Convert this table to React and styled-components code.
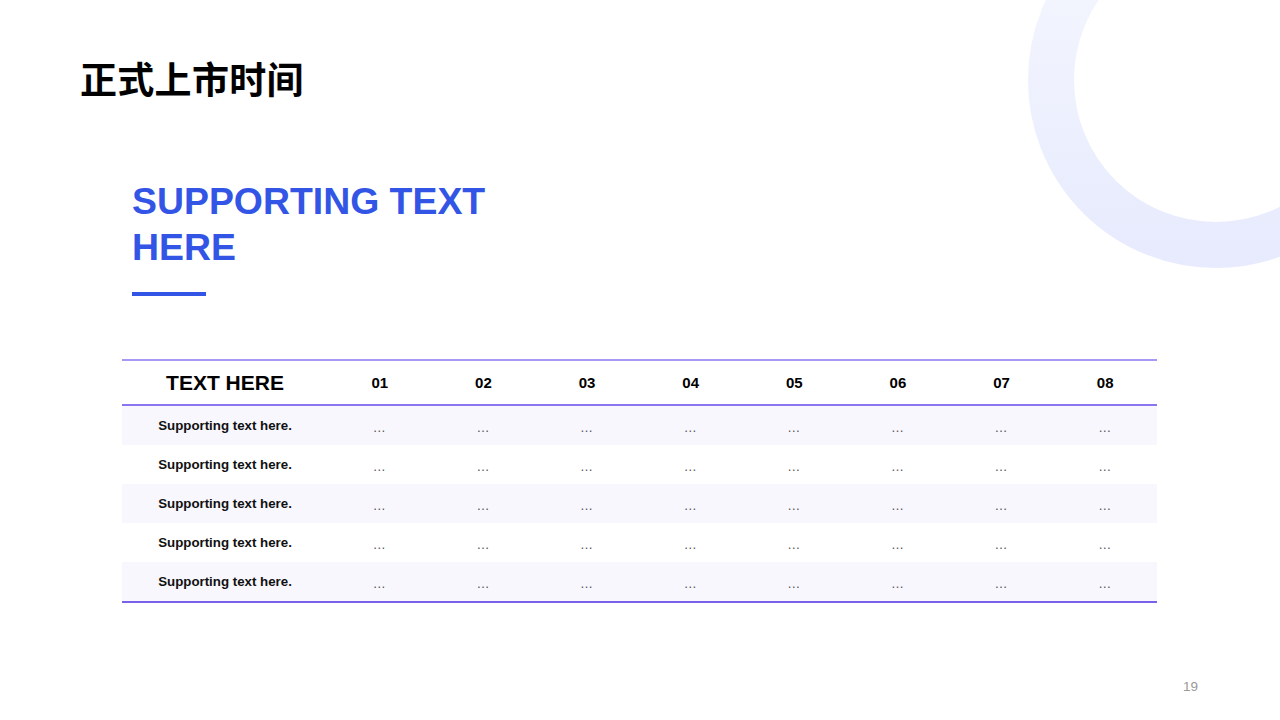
import React from 'react';
import styled, { createGlobalStyle } from 'styled-components';

const blue = `#3355e6`;
const rows = [1, 2, 3, 4, 5];
const cols = ['01', '02', '03', '04', '05', '06', '07', '08'];

const GlobalStyle = createGlobalStyle`
    html, body {
        margin: 0;
        padding: 0;
        background: #ffffff;
    }
    body {
        font-family: "Liberation Sans", Arial, sans-serif;
    }
`

const Slide = styled.div`
    position: relative;
    box-sizing: border-box;
    width: 1280px;
    height: 720px;
    overflow: hidden;
    background: #ffffff;
    display: flex;
    flex-direction: column;
`
const Ring = styled.svg`
    position: absolute;
    left: 1028px;
    top: -108px;
    width: 376px;
    height: 376px;
    pointer-events: none;
`
const Title = styled.h1`
    margin: 54px 0 0 80px;
    font-family: "Noto Sans CJK SC", "Liberation Sans", sans-serif;
    font-size: 37px;
    line-height: 48px;
    font-weight: 700;
    color: #000000;
    letter-spacing: 0.3px;
`
const Lead = styled.section`
    display: flex;
    flex-direction: column;
    align-items: flex-start;
    margin: 76px 0 0 132px;
`
const Subtitle = styled.h2`
    margin: 0;
    width: 380px;
    font-family: "Liberation Sans", Arial, sans-serif;
    font-size: 37.4px;
    line-height: 46px;
    font-weight: 700;
    color: ${blue};
`
const Bar = styled.div`
    width: 74px;
    height: 4px;
    margin-top: 22px;
    background: ${blue};
`
const Table = styled.div`
    margin: 63px 0 0 122px;
    width: 1035px;
    display: flex;
    flex-direction: column;
    border-bottom: 2px solid #7b61ea;
`
const Row = styled.div`
    display: grid;
    grid-template-columns: 206px repeat(8, 1fr);
    align-items: center;
    height: ${props => props.$head ? `43px` : `39px`};
    background: ${props => props.$shade ? `#f8f7fe` : `#ffffff`};
    ${props => props.$head && `
        border-top: 2px solid #a997f5;
        border-bottom: 2px solid #8b74ef;
    `}
`
const HeadLabel = styled.div`
    text-align: center;
    font-size: 21px;
    font-weight: 700;
    color: #000000;
`
const HeadNum = styled.div`
    text-align: center;
    font-size: 15px;
    font-weight: 700;
    color: #000000;
`
const RowLabel = styled.div`
    text-align: center;
    font-size: 13.3px;
    font-weight: 700;
    color: #111111;
`
const Cell = styled.div`
    text-align: center;
    font-size: 13px;
    line-height: 16px;
    padding-top: 5px;
    color: #555555;
    letter-spacing: 1px;
`
const Footer = styled.footer`
    margin-top: auto;
    display: flex;
    justify-content: flex-end;
    padding: 0 82px 25px 0;
    font-size: 13.5px;
    line-height: 16px;
    color: #999999;
`

export default function App() {
    return (
        <Slide>
            <GlobalStyle />
            <Ring viewBox="0 0 376 376">
                <defs>
                    <linearGradient id="ringFade" x1="0" y1="0" x2="0" y2="1">
                        <stop offset="0" stopColor="#f6f7fe" />
                        <stop offset="1" stopColor="#e7ebfd" />
                    </linearGradient>
                </defs>
                <circle cx="188" cy="188" r="165" fill="none" stroke="url(#ringFade)" strokeWidth="46" />
            </Ring>
            <Title>正式上市时间</Title>
            <Lead>
                <Subtitle>SUPPORTING TEXT HERE</Subtitle>
                <Bar />
            </Lead>
            <Table>
                <Row $head>
                    <HeadLabel>TEXT HERE</HeadLabel>
                    {cols.map(c => <HeadNum key={c}>{c}</HeadNum>)}
                </Row>
                {rows.map(r => (
                    <Row key={r} $shade={r % 2 === 1}>
                        <RowLabel>Supporting text here.</RowLabel>
                        {cols.map(c => <Cell key={c}>…</Cell>)}
                    </Row>
                ))}
            </Table>
            <Footer>19</Footer>
        </Slide>
    );
}
